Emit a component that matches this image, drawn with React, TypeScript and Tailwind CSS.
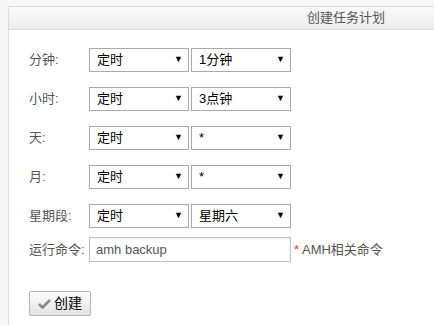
const rows = [
  { label: "分钟:", value: "1分钟" },
  { label: "小时:", value: "3点钟" },
  { label: "天:", value: "*" },
  { label: "月:", value: "*" },
  { label: "星期段:", value: "星期六" },
];

const Select = ({ text }: { text: string }) => (
  <div className="flex h-[24px] w-[100px] items-center justify-between border border-[#a9a9a9] bg-white pl-[7px] pr-[5px] text-[13px] text-black">
    <span>{text}</span>
    <span className="text-[9px]">▼</span>
  </div>
);

export default function App() {
  return (
    <div
      className="h-[325px] w-[434px] overflow-hidden bg-[#f7f7f7] pl-[8px] pt-[6px]"
      style={{ fontFamily: '"Liberation Sans", "Noto Sans CJK SC", sans-serif' }}
    >
      <div className="h-full border-l border-t border-[#dcdcdc] bg-white">
        <div className="flex h-[23px] items-center border-b border-[#dcdcdc] bg-gradient-to-b from-[#fafafa] to-[#ececec] pl-[298px] text-[13px] text-[#555]">
          创建任务计划
        </div>
        <div className="pl-[20px] pt-[18px]">
          <div className="flex flex-col gap-[15px]">
            {rows.map((r) => (
              <div key={r.label} className="flex items-center">
                <div className="w-[60px] text-[13px] text-[#555]">{r.label}</div>
                <div className="flex gap-[2px]">
                  <Select text="定时" />
                  <Select text={r.value} />
                </div>
              </div>
            ))}
          </div>
          <div className="mt-[9px] flex items-center">
            <div className="w-[60px] text-[13px] text-[#555]">运行命令:</div>
            <div className="flex h-[25px] w-[202px] items-center border border-[#bfbfbf] bg-white pl-[6px] text-[13px] text-[#555] shadow-[inset_0_1px_2px_rgba(0,0,0,0.08)]">
              amh backup
            </div>
            <div className="ml-[3px] text-[13px] text-[#555]">
              <span className="text-[#e03c3c]">*</span> AMH相关命令
            </div>
          </div>
          <div className="mt-[29px]">
            <button className="flex h-[25px] w-[62px] items-center justify-center gap-[3px] rounded-[2px] border border-[#b5b5b5] bg-gradient-to-b from-[#fcfcfc] to-[#e3e3e3] text-[14px] text-black">
              <svg width="13" height="11" viewBox="0 0 13 11">
                <path d="M1 6 L4.5 9.5 L12 2" fill="none" stroke="#8a8a8a" strokeWidth="2.6" />
              </svg>
              创建
            </button>
          </div>
        </div>
      </div>
    </div>
  );
}
